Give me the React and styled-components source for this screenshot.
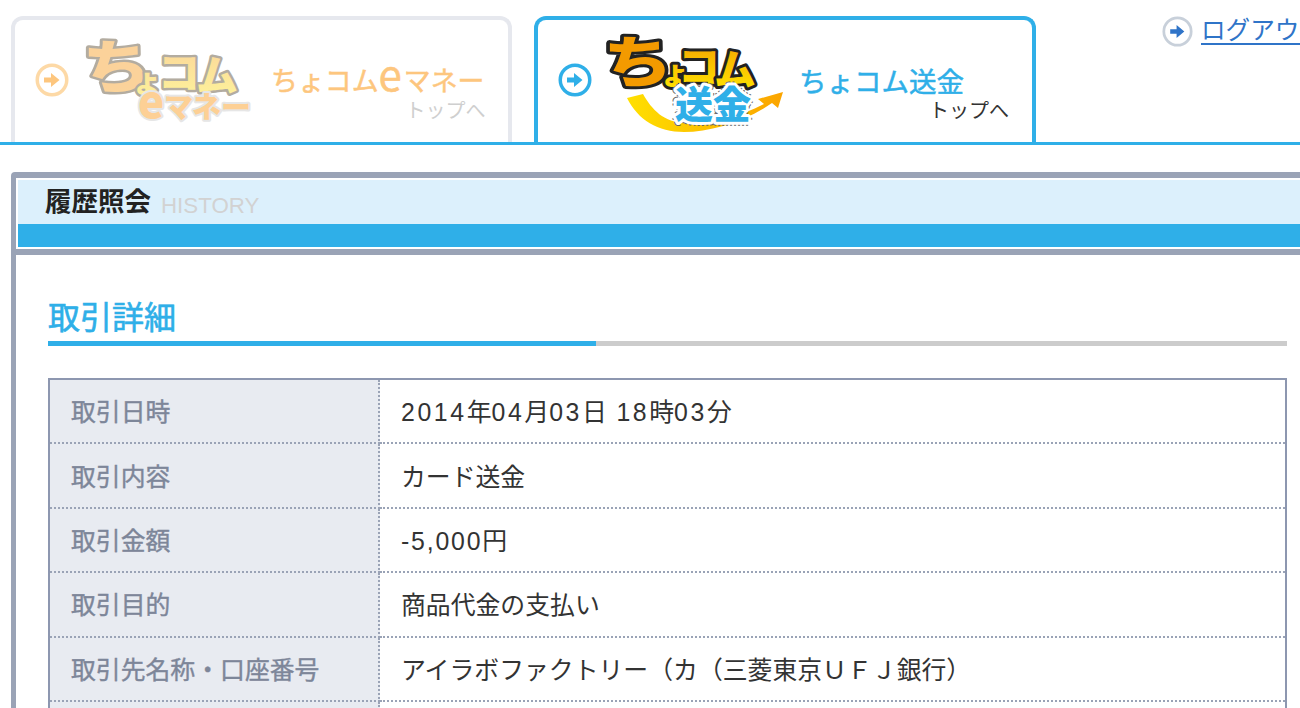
import React from 'react';
import styled, { createGlobalStyle } from 'styled-components';

const BLUE = '#2fafe8';
const FRAME = '#9aa3b6';
const ORANGE = '#fdc67e';

const GlobalStyle = createGlobalStyle`
	html, body {
		margin: 0;
		padding: 0;
		background: #fff;
	}
	body {
		font-family: "Liberation Sans", "Noto Sans CJK JP", sans-serif;
		color: #333;
	}
`;

const Page = styled.div`
	width: 1300px;
	height: 708px;
	overflow: hidden;
`;

const Header = styled.header`
	display: flex;
	align-items: flex-start;
	height: 126px;
	padding: 16px 0 0 11px;
	border-bottom: 3px solid ${ BLUE };
	overflow: hidden;
`;

const Tab = styled.a`
	box-sizing: border-box;
	flex: none;
	display: flex;
	align-items: flex-start;
	width: ${ ( { $active } ) => ( $active ? 502 : 501 ) }px;
	height: 126px;
	margin-right: ${ ( { $active } ) => ( $active ? 126 : 22 ) }px;
	padding: ${ ( { $active } ) => ( $active ? '12px 0 0 20px' : '18px 0 0 20px' ) };
	border: 4px solid ${ ( { $active } ) => ( $active ? BLUE : '#e6e8ee' ) };
	border-bottom: 0;
	border-radius: 12px 12px 0 0;
`;

const TabIcon = styled.svg`
	flex: none;
	width: 34px;
	height: 34px;
	margin-top: ${ ( { $active } ) => ( $active ? 31 : 25 ) }px;
`;

const Logo = styled.svg`
	flex: none;
	width: 190px;
	height: 104px;
	margin-left: ${ ( { $active } ) => ( $active ? 8 : 11 ) }px;
	overflow: visible;

	text {
		font-family: "Noto Sans CJK JP", sans-serif;
		font-weight: 900;
		paint-order: stroke;
		stroke-linejoin: round;
	}
`;

const TabText = styled.div`
	display: flex;
	flex-direction: column;
	align-items: flex-end;
	margin-left: ${ ( { $active } ) => ( $active ? 9 : 1 ) }px;
	margin-top: ${ ( { $active } ) => ( $active ? 28 : 22 ) }px;
`;

const TabTitle = styled.span`
	font-family: "Noto Sans CJK JP", sans-serif;
	font-size: ${ ( { $active } ) => ( $active ? 27.5 : 26.9 ) }px;
	line-height: 40px;
	white-space: nowrap;
	-webkit-text-stroke: 0.5px currentColor;
	color: ${ ( { $active } ) => ( $active ? BLUE : ORANGE ) };
`;

const TitleLatin = styled.span`
	font-size: 42px;
	line-height: 0;
	letter-spacing: 2px;
`;

const TabSub = styled.span`
	font-family: "Noto Sans CJK JP", sans-serif;
	font-size: 20px;
	line-height: 24px;
	margin-top: -2px;
	margin-right: ${ ( { $active } ) => ( $active ? -45 : -1 ) }px;
	color: ${ ( { $active } ) => ( $active ? '#333' : '#cfcfcf' ) };
`;

const Logout = styled.a`
	flex: none;
	display: flex;
	align-items: center;
	gap: 8px;
	height: 30px;
	font-family: "Noto Sans CJK JP", sans-serif;
	font-size: 24.6px;
	white-space: nowrap;
	color: #2f74c8;
`;

const LogoutLabel = styled.span`
	padding-bottom: 6px;
	text-decoration: underline;
	text-underline-offset: 4px;
`;

const Panel = styled.section`
	margin: 27px 0 0 11px;
	border-left: 5px solid ${ FRAME };
	border-top-left-radius: 4px;
`;

const PanelHead = styled.div`
	border-top: 6px solid ${ FRAME };
	border-bottom: 6px solid ${ FRAME };
	padding: 2px 0 2px 2px;
`;

const PanelTitleRow = styled.div`
	display: flex;
	align-items: center;
	gap: 10px;
	height: 44px;
	padding-left: 27px;
	background: #dcf0fc;
`;

const PanelTitle = styled.h1`
	margin: 0;
	padding-bottom: 4px;
	font-family: "Noto Sans CJK JP", sans-serif;
	font-size: 26.5px;
	line-height: 36px;
	font-weight: 700;
	color: #222;
`;

const PanelSub = styled.span`
	font-size: 22.3px;
	line-height: 36px;
	margin-top: 7px;
	color: #d2d2d2;
`;

const PanelBar = styled.div`
	height: 23px;
	background: ${ BLUE };
`;

const Content = styled.div`
	padding: 39px 13px 0 32px;
`;

const SectionTitle = styled.h2`
	margin: 0;
	padding-bottom: 5px;
	font-family: "Noto Sans CJK JP", sans-serif;
	font-size: 32px;
	line-height: 42px;
	font-weight: 400;
	-webkit-text-stroke: 0.6px currentColor;
	color: ${ BLUE };
`;

const SectionRule = styled.div`
	height: 5px;
	background: linear-gradient(to right, ${ BLUE } 548px, #cccccc 548px);
`;

const DetailTable = styled.table`
	box-sizing: border-box;
	width: 100%;
	margin-top: 32px;
	border-collapse: separate;
	border-spacing: 0;
	border: 2px solid #8d97b0;
	font-family: "Noto Sans CJK JP", sans-serif;
	font-size: 24.85px;
`;

const LabelCell = styled.th`
	box-sizing: border-box;
	width: 330px;
	height: 64.4px;
	padding: 0 0 2px 21px;
	text-align: left;
	font-weight: 400;
	-webkit-text-stroke: 0.4px currentColor;
	color: #7d8699;
	background: #e8ebf1;
	border-right: 2px dotted #9aa3b6;
	border-bottom: 2px dotted #9aa3b6;
`;

const ValueCell = styled.td`
	box-sizing: border-box;
	height: 64.4px;
	padding: 0 0 2px 21px;
	color: #333;
	border-bottom: 2px dotted #9aa3b6;
`;

const Num = styled.span`
	font-family: "Liberation Sans", sans-serif;
	letter-spacing: ${ ( { $gap } ) => $gap }px;
`;

const ROWS = [
	{
		label: '取引日時',
		value: (
			<>
				<Num $gap={ 2.6 }>2014</Num>年<Num $gap={ 2.6 }>04</Num>月<Num $gap={ 2.6 }>03</Num>日<Num $gap={ 2.6 }> 18</Num>時<Num $gap={ 2.6 }>03</Num>分
			</>
		),
	},
	{ label: '取引内容', value: 'カード送金' },
	{ label: '取引金額', value: <><Num $gap={ 1.8 }>-5,000</Num>円</> },
	{ label: '取引目的', value: '商品代金の支払い' },
	{ label: '取引先名称・口座番号', value: 'アイラボファクトリー（カ（三菱東京ＵＦＪ銀行）' },
	{ label: '', value: '' },
];

function ArrowIcon( { ring, arrow, ringWidth = 3 } ) {
	return (
		<>
			<circle cx="17" cy="17" r={ 17 - ringWidth / 2 - 0.5 } fill="#fff" stroke={ ring } strokeWidth={ ringWidth } />
			<path d="M9 14.5h7V10l8.5 7-8.5 7v-4.5H9z" fill={ arrow } />
		</>
	);
}

function MoneyLogo() {
	return (
		<Logo $active={ false } viewBox="0 0 190 104">
			<defs>
				<linearGradient id="moneyFill" gradientUnits="userSpaceOnUse" x1="0" y1="0" x2="0" y2="58">
					<stop offset="0" stopColor="#fbd29a" />
					<stop offset="1" stopColor="#fdf19a" />
				</linearGradient>
			</defs>
			<g fill="url(#moneyFill)" stroke="#b3aca0" strokeWidth="5">
				<text transform="translate(2 50) scale(1.2 1)" fontSize="58">ち</text>
				<text x="52" y="54" fontSize="30">ょ</text>
				<text x="78" y="50" fontSize="42">コ</text>
				<text x="116" y="53" fontSize="42">ム</text>
			</g>
			<g fill="#fdd095" stroke="#e6e6e6" strokeWidth="4">
				<text x="58" y="80" fontSize="44">e</text>
				<text x="84" y="80" fontSize="29">マ</text>
				<text x="112" y="80" fontSize="29">ネ</text>
				<text x="141" y="80" fontSize="30">ー</text>
			</g>
		</Logo>
	);
}

function RemitLogo() {
	return (
		<Logo $active viewBox="0 0 190 104">
			<defs>
				<linearGradient id="remitFill" gradientUnits="userSpaceOnUse" x1="0" y1="2" x2="0" y2="56">
					<stop offset="0" stopColor="#f39a00" />
					<stop offset="1" stopColor="#ffe000" />
				</linearGradient>
				<linearGradient id="swoosh" x1="0" y1="0" x2="1" y2="0">
					<stop offset="0" stopColor="#ffe000" />
					<stop offset="1" stopColor="#fba400" />
				</linearGradient>
			</defs>
			<path d="M27 66L43 62C52 78 64 90 84 91C110 91 140 85 164 72L158 67L183 60L178 76L172 71C145 90 110 100 84 100C58 100 38 88 27 66Z" fill="url(#swoosh)" />
			<g fill="url(#remitFill)" stroke="#222" strokeWidth="6">
				<text transform="translate(3 50) scale(1.25 1)" fontSize="56">ち</text>
				<text x="60" y="52" fontSize="30">ょ</text>
				<text x="78" y="50" fontSize="42">コ</text>
				<text x="114" y="53" fontSize="42">ム</text>
			</g>
			<g fill="#666" stroke="#666" strokeWidth="8" strokeDasharray="2 2">
				<text x="75" y="86" fontSize="38">送</text>
				<text x="113" y="86" fontSize="38">金</text>
			</g>
			<g fill={ BLUE } stroke="#fff" strokeWidth="6">
				<text x="75" y="86" fontSize="38">送</text>
				<text x="113" y="86" fontSize="38">金</text>
			</g>
		</Logo>
	);
}

export default function App() {
	return (
		<Page>
			<GlobalStyle />
			<Header>
				<Tab>
					<TabIcon viewBox="0 0 34 34"><ArrowIcon ring="#fdd9a6" arrow={ ORANGE } ringWidth={ 3.5 } /></TabIcon>
					<MoneyLogo />
					<TabText>
						<TabTitle>ちょコム<TitleLatin>e</TitleLatin>マネー</TabTitle>
						<TabSub>トップへ</TabSub>
					</TabText>
				</Tab>
				<Tab $active>
					<TabIcon $active viewBox="0 0 34 34"><ArrowIcon ring={ BLUE } arrow={ BLUE } ringWidth={ 3.5 } /></TabIcon>
					<RemitLogo />
					<TabText $active>
						<TabTitle $active>ちょコム送金</TabTitle>
						<TabSub $active>トップへ</TabSub>
					</TabText>
				</Tab>
				<Logout>
					<svg width="31" height="31" viewBox="0 0 34 34"><ArrowIcon ring="#c8d0da" arrow="#2f74c8" ringWidth={ 3 } /></svg>
					<LogoutLabel>ログアウト</LogoutLabel>
				</Logout>
			</Header>
			<Panel>
				<PanelHead>
					<PanelTitleRow>
						<PanelTitle>履歴照会</PanelTitle>
						<PanelSub>HISTORY</PanelSub>
					</PanelTitleRow>
					<PanelBar />
				</PanelHead>
				<Content>
					<SectionTitle>取引詳細</SectionTitle>
					<SectionRule />
					<DetailTable>
						<tbody>
							{ ROWS.map( ( { label, value }, index ) => (
								<tr key={ index }>
									<LabelCell>{ label }</LabelCell>
									<ValueCell>{ value }</ValueCell>
								</tr>
							) ) }
						</tbody>
					</DetailTable>
				</Content>
			</Panel>
		</Page>
	);
}
